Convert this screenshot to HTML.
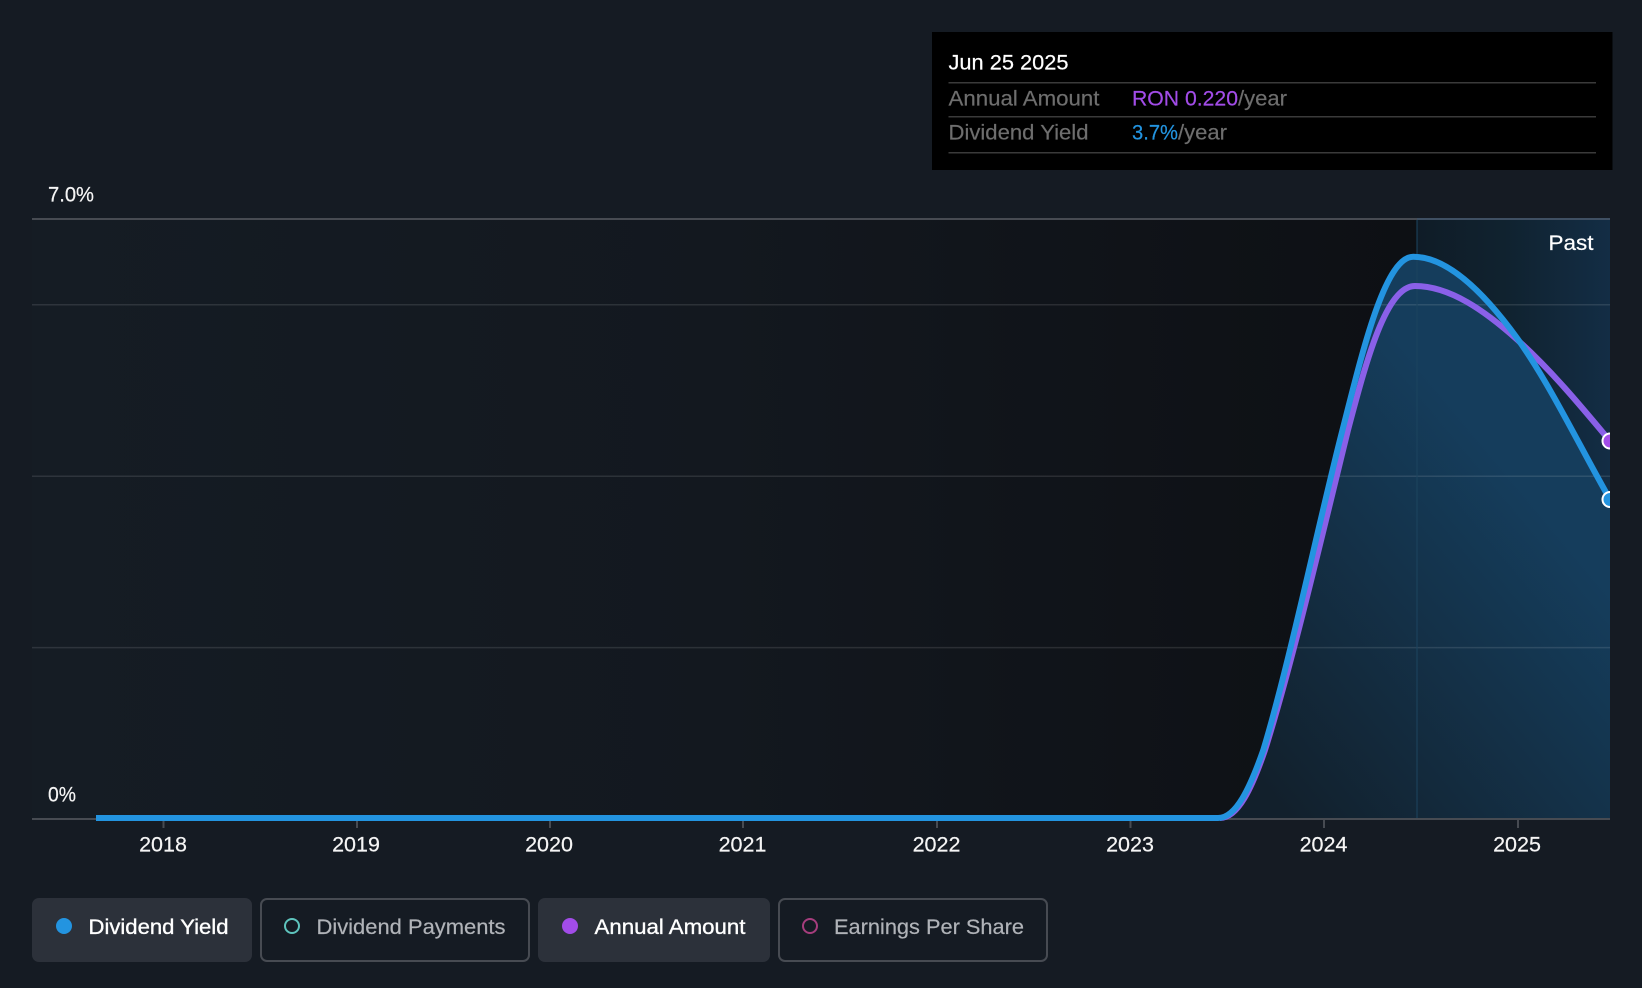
<!DOCTYPE html>
<html lang="en">
<head>
<meta charset="utf-8">
<title>Dividend chart</title>
<style>
html,body{margin:0;padding:0;background:#151b23;width:1642px;height:988px;overflow:hidden}
svg{display:block}
text{font-family:"Liberation Sans",Arial,sans-serif}
</style>
</head>
<body>
<svg width="1642" height="988" viewBox="0 0 1642 988" xmlns="http://www.w3.org/2000/svg">
<defs>
<linearGradient id="plot" gradientUnits="userSpaceOnUse" x1="32" y1="0" x2="1417" y2="0">
<stop offset="0" stop-color="#151c24"/>
<stop offset="0.5" stop-color="#13181f"/>
<stop offset="0.85" stop-color="#0f1217"/>
<stop offset="1" stop-color="#0d1014"/>
</linearGradient>
<linearGradient id="past" gradientUnits="userSpaceOnUse" x1="1417" y1="0" x2="1610" y2="0">
<stop offset="0" stop-color="#0f1c27"/>
<stop offset="0.45" stop-color="#10222f"/>
<stop offset="1" stop-color="#132d45"/>
</linearGradient>
<linearGradient id="area" gradientUnits="userSpaceOnUse" x1="1290" y1="819" x2="1590" y2="569">
<stop offset="0" stop-color="#12202c"/>
<stop offset="1" stop-color="#153d5c"/>
</linearGradient>
<clipPath id="c"><rect x="32" y="219" width="1578" height="610"/></clipPath>
</defs>

<rect width="1642" height="988" fill="#151b23"/>

<!-- plot background -->
<rect x="32" y="219" width="1385" height="600" fill="url(#plot)"/>
<rect x="1417" y="219" width="193" height="600" fill="url(#past)"/>

<!-- area under yield -->
<path d="M1218 819V818C1236 818 1250 788 1263.300 750C1289 665 1317 530 1341.700 433C1361 358 1384 256.700 1413.300 256.700C1450 256.700 1488 298 1517 338C1550 384 1580 447 1610 499.500V819Z" fill="url(#area)"/>

<!-- grid -->
<g stroke="#fff" stroke-opacity="0.11" stroke-width="1.5">
<line x1="32" y1="304.8" x2="1610" y2="304.8"/>
<line x1="32" y1="476.2" x2="1610" y2="476.2"/>
<line x1="32" y1="647.6" x2="1610" y2="647.6"/>
</g>
<line x1="1417" y1="219" x2="1417" y2="819" stroke="#1d4460" stroke-opacity="0.7" stroke-width="1.5"/>
<line x1="32" y1="219" x2="1417" y2="219" stroke="#474b52" stroke-width="2"/>
<line x1="1417" y1="219" x2="1610" y2="219" stroke="#3f5063" stroke-width="2"/>
<line x1="32" y1="819" x2="1610" y2="819" stroke="#474b52" stroke-width="2"/>

<!-- ticks -->
<g stroke="#474b52" stroke-width="2">
<line x1="163.5" y1="819" x2="163.5" y2="828"/>
<line x1="357" y1="819" x2="357" y2="828"/>
<line x1="550" y1="819" x2="550" y2="828"/>
<line x1="743" y1="819" x2="743" y2="828"/>
<line x1="937" y1="819" x2="937" y2="828"/>
<line x1="1130.500" y1="819" x2="1130.500" y2="828"/>
<line x1="1324" y1="819" x2="1324" y2="828"/>
<line x1="1518" y1="819" x2="1518" y2="828"/>
</g>

<!-- lines -->
<g clip-path="url(#c)" fill="none" stroke-width="6">
<path d="M1220 818C1238 818 1252 788 1265 750C1291 668 1321 540 1348 430C1366 362 1386 286 1415 286C1450 286 1485 311 1517 339.500C1550 369 1580 405 1610 441" stroke="#8a60e8"/>
<path d="M96 818H1218C1236 818 1250 788 1263.300 750C1289 665 1317 530 1341.700 433C1361 358 1384 256.700 1413.300 256.700C1450 256.700 1488 298 1517 338C1550 384 1580 447 1610 499.500" stroke="#2394e0"/>
<circle cx="1610" cy="441" r="7.500" fill="#a24ce8" stroke="#fff" stroke-width="2"/>
<circle cx="1610" cy="499.500" r="7.500" fill="#2394e0" stroke="#fff" stroke-width="2"/>
</g>

<!-- axis labels -->
<g fill="#f5f5f5" font-size="21.500" stroke="#f5f5f5" stroke-width="0.200">
<text x="48" y="201.500" textLength="46" lengthAdjust="spacingAndGlyphs">7.0%</text>
<text x="48" y="801.500" textLength="28" lengthAdjust="spacingAndGlyphs">0%</text>
<g text-anchor="middle">
<text x="163" y="851.500">2018</text>
<text x="356" y="851.500">2019</text>
<text x="549" y="851.500">2020</text>
<text x="742.500" y="851.500">2021</text>
<text x="936.500" y="851.500">2022</text>
<text x="1130" y="851.500">2023</text>
<text x="1323.500" y="851.500">2024</text>
<text x="1517" y="851.500">2025</text>
</g>
<text x="1548.500" y="250" textLength="45" lengthAdjust="spacingAndGlyphs" fill="#fff" stroke="#fff">Past</text>
</g>

<!-- tooltip -->
<rect x="932" y="32" width="680.500" height="138" fill="#000"/>
<g stroke="#3a3a3a" stroke-width="1.500">
<line x1="948.500" y1="82.700" x2="1596" y2="82.700"/>
<line x1="948.500" y1="116.700" x2="1596" y2="116.700"/>
<line x1="948.500" y1="152.700" x2="1596" y2="152.700"/>
</g>
<g font-size="21.500" stroke-width="0.200">
<text x="948.500" y="69.500" fill="#fff" stroke="#fff" textLength="120" lengthAdjust="spacingAndGlyphs">Jun 25 2025</text>
<text x="948.500" y="105.500" fill="#6e6e6e" stroke="#6e6e6e" textLength="151" lengthAdjust="spacingAndGlyphs">Annual Amount</text>
<text x="948.500" y="139.500" fill="#6e6e6e" stroke="#6e6e6e" textLength="140" lengthAdjust="spacingAndGlyphs">Dividend Yield</text>
<text x="1132" y="105.500" fill="#a24ce8" stroke="#a24ce8" textLength="106" lengthAdjust="spacingAndGlyphs">RON 0.220</text>
<text x="1238" y="105.500" fill="#6e6e6e" stroke="#6e6e6e" textLength="49" lengthAdjust="spacingAndGlyphs">/year</text>
<text x="1132" y="139.500" fill="#2394e0" stroke="#2394e0" textLength="46" lengthAdjust="spacingAndGlyphs">3.7%</text>
<text x="1178" y="139.500" fill="#6e6e6e" stroke="#6e6e6e" textLength="49" lengthAdjust="spacingAndGlyphs">/year</text>
</g>

<!-- legend -->
<rect x="32" y="898" width="220" height="64" rx="7" fill="#2c313a"/>
<rect x="261" y="899" width="268" height="62" rx="6" fill="none" stroke="#474b52" stroke-width="2"/>
<rect x="538" y="898" width="232" height="64" rx="7" fill="#2c313a"/>
<rect x="779" y="899" width="268" height="62" rx="6" fill="none" stroke="#474b52" stroke-width="2"/>
<circle cx="64" cy="926" r="8" fill="#2394e0"/>
<circle cx="292" cy="926" r="7" fill="none" stroke="#5ec4bd" stroke-width="2"/>
<circle cx="570" cy="926" r="8" fill="#a24ce8"/>
<circle cx="810" cy="926" r="7" fill="none" stroke="#a63d7d" stroke-width="2"/>
<g font-size="21.500">
<text x="88.500" y="934" fill="#fff" textLength="140" lengthAdjust="spacingAndGlyphs" stroke="#fff" stroke-width="0.350">Dividend Yield</text>
<text x="316.500" y="934" fill="#b0b3b8" stroke="#b0b3b8" stroke-width="0.200" textLength="189" lengthAdjust="spacingAndGlyphs">Dividend Payments</text>
<text x="594.500" y="934" fill="#fff" textLength="151" lengthAdjust="spacingAndGlyphs" stroke="#fff" stroke-width="0.350">Annual Amount</text>
<text x="834" y="934" fill="#b0b3b8" stroke="#b0b3b8" stroke-width="0.200" textLength="190" lengthAdjust="spacingAndGlyphs">Earnings Per Share</text>
</g>
</svg>
</body>
</html>
